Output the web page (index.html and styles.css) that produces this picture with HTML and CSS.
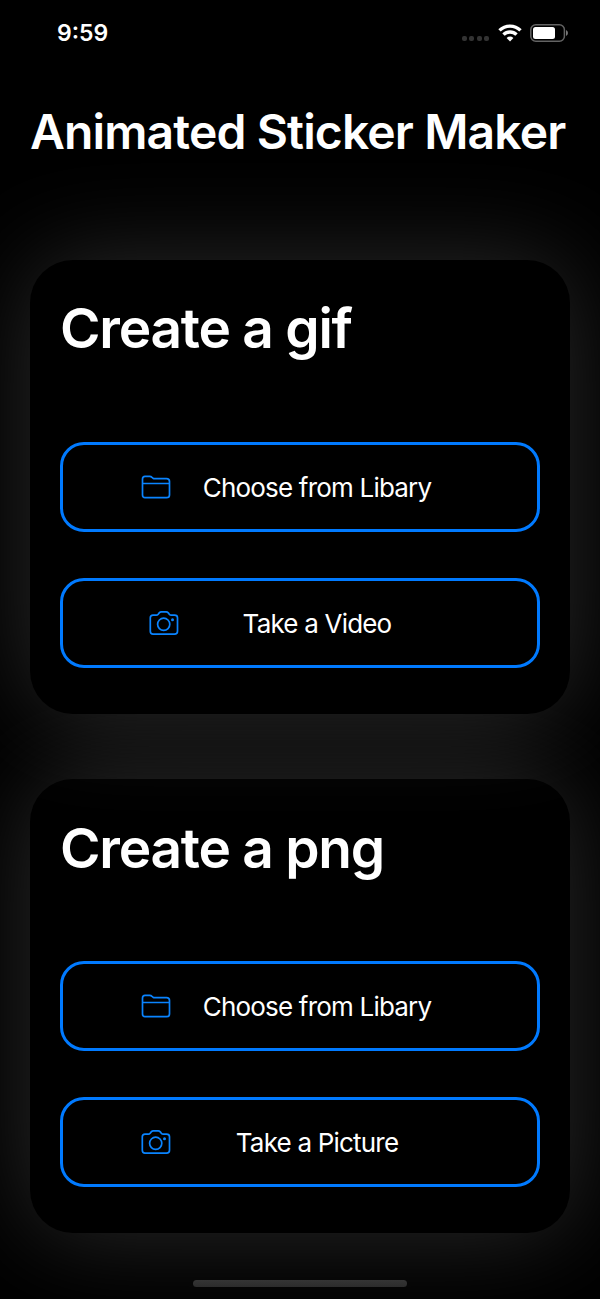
FILE: index.html
```
<!DOCTYPE html>
<html lang="en">
<head>
	<meta charset="UTF-8">
	<meta name="viewport" content="width=device-width, initial-scale=1.0">
	<link rel="stylesheet" href="styles.css">
	<title>Animated Sticker Maker</title>
</head>
<body>
	<svg class="sprite" width="0" height="0" aria-hidden="true">
		<symbol id="folder" viewBox="0 0 30 24">
			<path d="M1.500 20V4Q1.500 1.300 4 1.300H8.700Q10 1.300 11 2.300L12 3.200Q12.700 3.700 14 3.700H25.500Q28.500 3.700 28.500 6.500V20Q28.500 22.700 25.500 22.700H4Q1.500 22.700 1.500 20ZM1.500 8.500H28.500"/>
		</symbol>
		<symbol id="camera" viewBox="0 0 30 26">
			<path d="M1.300 21.300V7.800Q1.300 5.200 4 5.200H7.200Q8.400 5.200 9.200 4.200L10.200 2.900Q11.100 1.900 12.300 1.900H17.200Q18.400 1.900 19.300 2.900L20.300 4.200Q21.100 5.200 22.300 5.200H25.500Q28.500 5.200 28.500 7.800V21.300Q28.500 24.200 25.500 24.200H4Q1.300 24.200 1.300 21.300Z"/>
			<circle cx="14.700" cy="14.300" r="6.100"/>
			<circle class="dot" cx="23.500" cy="9.800" r="1.500"/>
		</symbol>
	</svg>

	<header class="status">
		<time class="clock">9:59</time>
		<div class="signals">
			<span class="dots"><i></i><i></i><i></i><i></i></span>
			<svg class="wifi" width="24" height="18" viewBox="0 0 24 18">
				<path d="M1.500 6.400A15 15 0 0 1 22.500 6.400M5.500 10.600A9.300 9.300 0 0 1 18.500 10.600"/>
				<path class="base" d="M8.600 13.900Q12 11.200 15.400 13.900L12 17.400Z"/>
			</svg>
			<svg class="battery" width="39" height="18" viewBox="0 0 39 18">
				<rect class="case" x="0.800" y="0.800" width="33.600" height="16.400" rx="5"/>
				<rect class="level" x="3" y="3" width="22" height="12" rx="2.500"/>
				<path class="cap" d="M36 6Q38 7 38 9T36 12Z"/>
			</svg>
		</div>
	</header>

	<main>
		<h1 class="title">Animated Sticker Maker</h1>

		<section class="card card-gif">
			<h2>Create a gif</h2>
			<button class="action">
				<svg class="icon" width="30" height="24"><use href="#folder"/></svg>
				<span>Choose from Libary</span>
			</button>
			<button class="action action-video">
				<svg class="icon" width="30" height="26"><use href="#camera"/></svg>
				<span>Take a Video</span>
			</button>
		</section>

		<section class="card">
			<h2 class="png">Create a png</h2>
			<button class="action">
				<svg class="icon" width="30" height="24"><use href="#folder"/></svg>
				<span>Choose from Libary</span>
			</button>
			<button class="action">
				<svg class="icon" width="30" height="26"><use href="#camera"/></svg>
				<span>Take a Picture</span>
			</button>
		</section>
	</main>

	<div class="home-bar"></div>
</body>
</html>
```
FILE: styles.css
```
* {
  box-sizing: border-box;
  margin: 0;
  padding: 0;
}
body {
  position: relative;
  height: 1299px;
  overflow: hidden;
  background: #000;
  color: #fff;
  font-family: Inter, "Liberation Sans", sans-serif;
}
.sprite {
  position: absolute;
}

/* status bar */
.status {
  display: flex;
  justify-content: space-between;
  height: 66px;
  padding: 0 32px 0 57px;
}
.clock {
  font-size: 23px;
  font-weight: 600;
  line-height: 66px;
}
.signals {
  display: flex;
  align-items: flex-start;
  padding-top: 24px;
}
.dots {
  display: flex;
  gap: 2.3px;
  margin: 12px 9px 0 0;
}
.dots i {
  width: 5px;
  height: 5px;
  border-radius: 2px;
  background: #333;
}
.wifi {
  margin-right: 8px;
  fill: none;
  stroke: #fff;
  stroke-width: 3.4;
}
.wifi .base {
  fill: #fff;
  stroke: none;
}
.battery {
  fill: #fff;
  margin-right: -1px;
}
.battery .case {
  fill: none;
  stroke: #636363;
  stroke-width: 1.5;
}
.battery .cap {
  fill: #777;
}

/* content */
main {
  display: flex;
  flex-direction: column;
  padding: 0 30px;
}
.title {
  height: 194px;
  padding-top: 36px;
  font-size: 48px;
  font-weight: 600;
  line-height: 60px;
  letter-spacing: -0.87px;
  white-space: nowrap;
}
.card {
  position: relative;
  height: 454px;
  padding: 33px 30px 0;
  border-radius: 43px;
  background: #000;
  box-shadow: 0 0 100px rgba(255, 255, 255, 0.17);
}
/* keeps its glow above the next card */
.card-gif {
  z-index: 1;
  margin-bottom: 65px;
}
.card h2 {
  height: 149px;
  font-size: 55px;
  font-weight: 600;
  line-height: 70px;
  letter-spacing: -1.25px;
}
.card .png {
  padding-top: 1px;
}
.action {
  display: grid;
  grid-template-columns: 30px 240px;
  column-gap: 26px;
  align-items: center;
  width: 480px;
  height: 90px;
  padding-left: 78px;
  border: 3px solid #007aff;
  border-radius: 24px;
  background: none;
  color: #fff;
  font: 400 26px Inter, "Liberation Sans", sans-serif;
  text-align: center;
  white-space: nowrap;
}
.action + .action {
  margin-top: 46px;
}
.action-video {
  grid-template-columns: 30px 224px;
  padding-left: 86px;
}
.action span {
  letter-spacing: -0.8px;
}
.icon {
  fill: none;
  stroke: #0a84ff;
  stroke-width: 1.7;
}
.dot {
  fill: #0a84ff;
  stroke: none;
}

.home-bar {
  position: absolute;
  z-index: 2;
  bottom: 12px;
  left: 193px;
  width: 214px;
  height: 7px;
  border-radius: 4px;
  background: linear-gradient(#353535, #2c2c2c);
}
```
